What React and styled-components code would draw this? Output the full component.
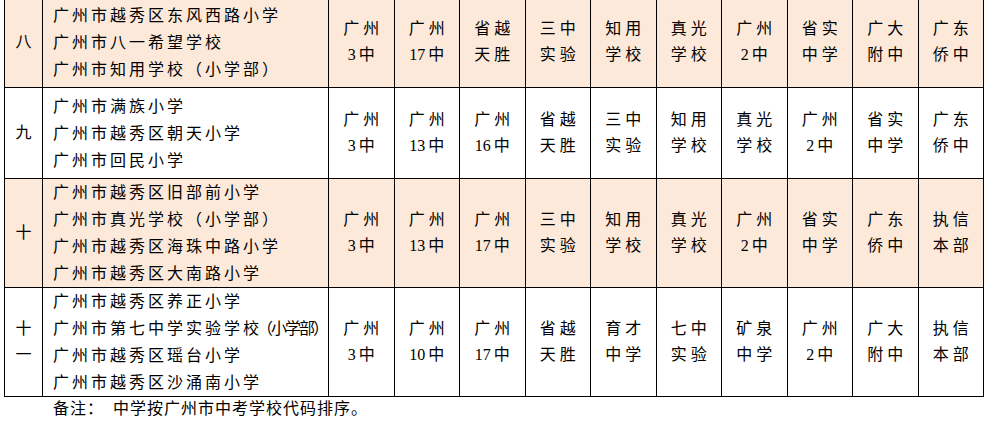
import React from "react";
import styled, { createGlobalStyle } from "styled-components";

const Global = createGlobalStyle`
  html, body { margin: 0; padding: 0; background: #ffffff; }
  body { font-family: "Liberation Serif", "Noto Sans CJK SC", serif; color: #000; }
`;

const Page = styled.div`
  width: 987px;
  height: 436px;
  overflow: hidden;
  padding-left: 4px;
  box-sizing: border-box;
`;

const Table = styled.table`
  margin-top: -4px;
  width: 980px;
  table-layout: fixed;
  border-collapse: collapse;
  font-size: 16px;
`;

const Row = styled.tr`
  height: ${(p) => p.$h}px;
  background: ${(p) => (p.$shade ? "#fde9d9" : "#ffffff")};
`;

const Cell = styled.td`
  border: 1px solid #000;
  padding: 0;
  vertical-align: middle;
`;

const IndexCell = styled(Cell)`
  text-align: center;
  line-height: 26px;
`;

const SchoolsCell = styled(Cell)`
  padding-left: 10px;
  line-height: 27px;
  letter-spacing: 3px;
  white-space: nowrap;
  overflow: hidden;
`;

const MidCell = styled(Cell)`
  text-align: center;
  line-height: 26px;
  letter-spacing: 4px;
  padding-left: 4px;
`;

const Line = styled.div``;

const Tight = styled.span`
  letter-spacing: -2px;
`;

const Num = styled.span`
  letter-spacing: 0;
  margin-right: 3px;
`;

const Note = styled.div`
  padding-left: 49px;
  line-height: 22px;
  font-size: 16px;
  letter-spacing: 1px;
  margin-top: 1px;
`;

const NoteGap = styled.span`
  display: inline-block;
  width: 9px;
`;

const rows = [
  {
    idx: ["八"],
    shade: true,
    h: 91,
    schools: ["广州市越秀区东风西路小学", "广州市八一希望学校", "广州市知用学校（小学部）"],
    mids: ["广州/3中", "广州/17中", "省越/天胜", "三中/实验", "知用/学校", "真光/学校", "广州/2中", "省实/中学", "广大/附中", "广东/侨中"],
  },
  {
    idx: ["九"],
    shade: false,
    h: 91,
    schools: ["广州市满族小学", "广州市越秀区朝天小学", "广州市回民小学"],
    mids: ["广州/3中", "广州/13中", "广州/16中", "省越/天胜", "三中/实验", "知用/学校", "真光/学校", "广州/2中", "省实/中学", "广东/侨中"],
  },
  {
    idx: ["十"],
    shade: true,
    h: 109,
    schools: ["广州市越秀区旧部前小学", "广州市真光学校（小学部）", "广州市越秀区海珠中路小学", "广州市越秀区大南路小学"],
    mids: ["广州/3中", "广州/13中", "广州/17中", "三中/实验", "知用/学校", "真光/学校", "广州/2中", "省实/中学", "广东/侨中", "执信/本部"],
  },
  {
    idx: ["十", "一"],
    shade: false,
    h: 109,
    schools: ["广州市越秀区养正小学", ["广州市第七中学实验学", "校（小学部）"], "广州市越秀区瑶台小学", "广州市越秀区沙涌南小学"],
    mids: ["广州/3中", "广州/10中", "广州/17中", "省越/天胜", "育才/中学", "七中/实验", "矿泉/中学", "广州/2中", "广大/附中", "执信/本部"],
  },
];

function MidText({ text }) {
  const m = text.match(/^(\d+)(.*)$/);
  if (m) {
    return (
      <>
        <Num>{m[1]}</Num>
        {m[2]}
      </>
    );
  }
  return text;
}

export default function App() {
  return (
    <Page>
      <Global />
      <Table>
        <colgroup>
          <col style={{ width: 38 }} />
          <col style={{ width: 286 }} />
          {Array.from({ length: 10 }).map((_, i) => (
            <col key={i} style={{ width: 65.5 }} />
          ))}
        </colgroup>
        <tbody>
          {rows.map((r, i) => (
            <Row key={i} $shade={r.shade} $h={r.h}>
              <IndexCell>
                {r.idx.map((t, j) => (
                  <Line key={j}>{t}</Line>
                ))}
              </IndexCell>
              <SchoolsCell>
                {r.schools.map((s, j) =>
                  Array.isArray(s) ? (
                    <Line key={j}>
                      {s[0]}
                      <Tight>{s[1]}</Tight>
                    </Line>
                  ) : (
                    <Line key={j}>{s}</Line>
                  )
                )}
              </SchoolsCell>
              {r.mids.map((m, j) => (
                <MidCell key={j}>
                  {m.split("/").map((t, k) => (
                    <Line key={k}>
                      <MidText text={t} />
                    </Line>
                  ))}
                </MidCell>
              ))}
            </Row>
          ))}
        </tbody>
      </Table>
      <Note>
        备注：<NoteGap />中学按广州市中考学校代码排序。
      </Note>
    </Page>
  );
}
